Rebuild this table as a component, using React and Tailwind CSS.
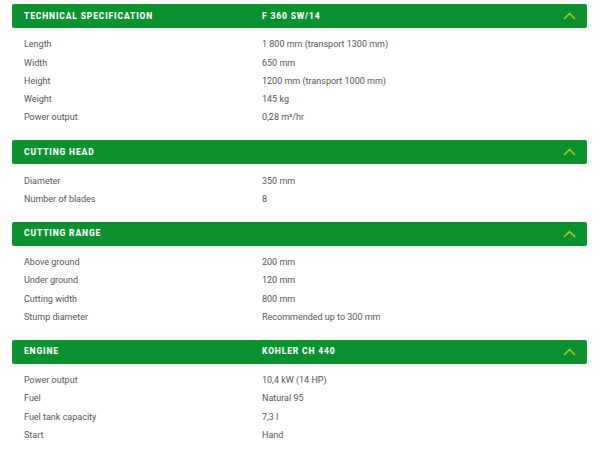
import React from 'react';

const sections = [
  {
    title: 'Technical specification',
    value: 'F 360 SW/14',
    rows: [
      ['Length', '1 800 mm (transport 1300 mm)'],
      ['Width', '650 mm'],
      ['Height', '1200 mm (transport 1000 mm)'],
      ['Weight', '145 kg'],
      ['Power output', '0,28 m³/hr'],
    ],
  },
  {
    title: 'Cutting head',
    value: '',
    rows: [
      ['Diameter', '350 mm'],
      ['Number of blades', '8'],
    ],
  },
  {
    title: 'Cutting range',
    value: '',
    rows: [
      ['Above ground', '200 mm'],
      ['Under ground', '120 mm'],
      ['Cutting width', '800 mm'],
      ['Stump diameter', 'Recommended up to 300 mm'],
    ],
  },
  {
    title: 'Engine',
    value: 'Kohler CH 440',
    rows: [
      ['Power output', '10,4 kW (14 HP)'],
      ['Fuel', 'Natural 95'],
      ['Fuel tank capacity', '7,3 l'],
      ['Start', 'Hand'],
    ],
  },
];

function Chevron() {
  return (
    <svg width="13" height="8" viewBox="0 0 13 8" fill="none">
      <path d="M1 7 L6.5 1.5 L12 7" stroke="#add51a" strokeWidth="1.4" />
    </svg>
  );
}

function Section({ section }) {
  return (
    <div>
      <div className="flex items-center h-6 bg-[#0b922f] rounded-[2px] pl-3 pr-[11px] text-white font-extrabold uppercase text-[8.5px] tracking-[0.1em]">
        <span className="w-[238px]">{section.title}</span>
        <span className="flex-1">{section.value}</span>
        <Chevron />
      </div>
      <div className="pt-[8px] pb-[13px] pl-3">
        {section.rows.map(([label, val]) => (
          <div key={label} className="flex items-center h-[18.25px] text-[9px] text-[#555]">
            <span className="w-[238px]">{label}</span>
            <span>{val}</span>
          </div>
        ))}
      </div>
    </div>
  );
}

export default function App() {
  return (
    <div className="w-[600px] h-[450px] bg-white overflow-hidden pt-1 pl-3 pr-[13px] font-['Roboto',sans-serif]">
      {sections.map(s => (
        <Section key={s.title} section={s} />
      ))}
    </div>
  );
}
